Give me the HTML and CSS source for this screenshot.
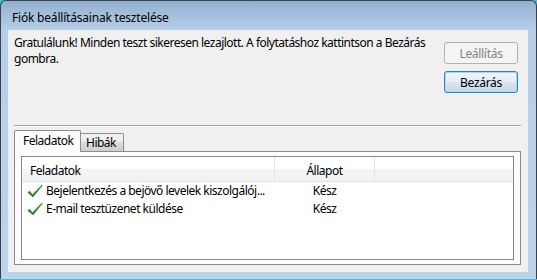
FILE: index.html
```html
<!DOCTYPE html>
<html lang="hu">
<head>
    <meta charset="UTF-8">
    <title>Fiók beállításainak tesztelése</title>
    <link rel="stylesheet" href="styles.css">
</head>
<body>

    <!-- Dialog window -->
    <div class="window">
        <div class="titlebar">Fiók beállításainak tesztelése</div>

        <div class="client">
            <!-- Message and buttons -->
            <div class="top">
                <p class="message">Gratulálunk! Minden teszt sikeresen lezajlott. A folytatáshoz kattintson a Bezárás<br>gombra.</p>
                <div class="actions">
                    <button class="btn" disabled>Leállítás</button>
                    <button class="btn btn-default">Bezárás</button>
                </div>
            </div>

            <div class="separator"></div>

            <!-- Tabs -->
            <div class="tabs">
                <div class="tab active">Feladatok</div>
                <div class="tab">Hibák</div>
            </div>

            <div class="panel">
                <div class="list">
                    <div class="list-head">
                        <div class="col col-task">Feladatok</div>
                        <div class="col col-status">Állapot</div>
                        <div class="col col-rest"></div>
                    </div>

                    <div class="row">
                        <div class="cell-task">
                            <svg class="check" width="16" height="14" viewBox="0 0 16 14">
                                <path d="M0.5 8.5 L2.5 6.8 L5.6 10.2 L14.8 0.8 L15.6 1.6 L6 13.2 Z" fill="#1f7d1f"/>
                                <path d="M1.5 8.2 L2.6 7.4 L5.6 10.8 L14.9 1.3" fill="none" stroke="#5cb85c" stroke-width="0.8"/>
                            </svg>
                            <span>Bejelentkezés a bejövő levelek kiszolgálój...</span>
                        </div>
                        <div class="cell-status">Kész</div>
                    </div>

                    <div class="row">
                        <div class="cell-task">
                            <svg class="check" width="16" height="14" viewBox="0 0 16 14">
                                <path d="M0.5 8.5 L2.5 6.8 L5.6 10.2 L14.8 0.8 L15.6 1.6 L6 13.2 Z" fill="#1f7d1f"/>
                                <path d="M1.5 8.2 L2.6 7.4 L5.6 10.8 L14.9 1.3" fill="none" stroke="#5cb85c" stroke-width="0.8"/>
                            </svg>
                            <span>E-mail tesztüzenet küldése</span>
                        </div>
                        <div class="cell-status">Kész</div>
                    </div>
                </div>
            </div>
        </div>
    </div>

</body>
</html>
```

FILE: styles.css
```css
/* Page */
html, body {
    margin: 0;
    padding: 0;
}

body {
    width: 537px;
    height: 280px;
    background-color: #37c3d6;
    font-family: "Noto Sans", "Open Sans", sans-serif;
    font-size: 12px;
    letter-spacing: -0.5px;
    color: #000;
}

/* Window frame */
.window {
    box-sizing: border-box;
    width: 537px;
    height: 279px;
    border: 1px solid #3b4048;
    border-bottom: none;
    border-radius: 6px 6px 0 0;
    background: linear-gradient(to bottom, #93b0d0 0, #b6cfe8 29px, #bcd3ea 100%);
    padding: 0 8px 7px 7px;
    display: flex;
    flex-direction: column;
}

/* Title bar */
.titlebar {
    height: 29px;
    line-height: 34px;
    padding-left: 4px;
    letter-spacing: -0.2px;
    white-space: nowrap;
}

/* Client area */
.client {
    flex-grow: 1;
    background-color: #f0f0f0;
    padding: 12px 7px 7px 6px;
    display: flex;
    flex-direction: column;
}

.top {
    display: flex;
    justify-content: space-between;
}

.message {
    margin: -7px 0 0 0;
    line-height: 16px;
    white-space: nowrap;
}

.actions {
    display: flex;
    flex-direction: column;
    gap: 7px;
    padding-right: 3px;
}

/* Buttons */
.btn {
    box-sizing: border-box;
    width: 74px;
    height: 22px;
    font-family: inherit;
    font-size: 12px;
    letter-spacing: -0.3px;
    color: #000;
    border: 1px solid #707070;
    border-radius: 3px;
    background: linear-gradient(to bottom, #f2f2f2 0, #ebebeb 50%, #dddddd 50%, #cfcfcf 100%);
    padding: 0;
}

.btn:disabled {
    color: #838383;
    border-color: #adb2b5;
    background: #f4f4f4;
}

.btn-default {
    border-color: #3c7fb1;
    box-shadow: inset 0 0 0 1px #9fdcf6;
    background: linear-gradient(to bottom, #f0f5f9 0, #e6eef4 50%, #d7e5ef 50%, #cadbe7 100%);
}

/* Etched separator */
.separator {
    margin-top: 32px;
    border-top: 1px solid #a0a0a0;
    border-bottom: 1px solid #ffffff;
}

/* Tabs */
.tabs {
    display: flex;
    align-items: flex-end;
    height: 21px;
    margin-top: 3px;
}

.tab {
    box-sizing: border-box;
    width: 43px;
    height: 18px;
    line-height: 17px;
    padding-left: 5px;
    border: 1px solid #898c95;
    border-bottom: none;
    border-left: none;
    border-radius: 0 2px 0 0;
    background: linear-gradient(to bottom, #f3f3f3 0, #ebebeb 50%, #dddddd 50%, #cfcfcf 100%);
}

.tab.active {
    position: relative;
    width: 67px;
    height: 22px;
    margin-bottom: -1px;
    line-height: 19px;
    padding-left: 8px;
    border-left: 1px solid #898c95;
    border-radius: 2px 2px 0 0;
    background: #fcfcfc;
}

/* Tab panel */
.panel {
    flex-grow: 1;
    border: 1px solid #898c95;
    background-color: #fcfcfc;
    padding: 4px 6px;
    display: flex;
}

/* List view */
.list {
    flex-grow: 1;
    border: 1px solid #828790;
    background-color: #fff;
}

.list-head {
    display: flex;
    height: 24px;
    background: linear-gradient(to bottom, #ffffff 0, #ffffff 50%, #f4f5f7 50%, #f1f2f4 100%);
    border-bottom: 1px solid #e2e4e8;
}

.col {
    box-sizing: border-box;
    padding-top: 4px;
    line-height: 20px;
    border-right: 1px solid #e3e5e8;
}

.col-task {
    width: 253px;
    padding-left: 8px;
}

.col-status {
    width: 100px;
    text-align: center;
}

.col-rest {
    flex-grow: 1;
    border-right: none;
}

.row {
    display: flex;
    height: 18px;
    line-height: 18px;
}

.cell-task {
    width: 253px;
    box-sizing: border-box;
    padding-left: 5px;
    display: flex;
    align-items: center;
    gap: 3px;
    white-space: nowrap;
    overflow: hidden;
}

.cell-status {
    width: 99px;
    text-align: center;
}

.check {
    flex-shrink: 0;
}
```
